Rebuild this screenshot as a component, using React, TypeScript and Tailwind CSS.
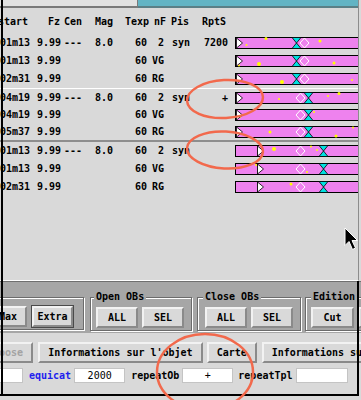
import React from "react";

type Row = { s: string; fz: string; cen?: string; mag?: string; t: string; nf: string; pis?: string; r?: string };
type Mark = { cut?: number; tri: number; dia: number; hour: number; dots: [number, number, number][] };

const rows: Row[] = [
  { s: "01m13", fz: "9.99", cen: "---", mag: "8.0", t: "60", nf: "2", pis: "syn", r: "7200" },
  { s: "01m13", fz: "9.99", t: "60", nf: "VG" },
  { s: "02m31", fz: "9.99", t: "60", nf: "RG" },
  { s: "04m19", fz: "9.99", cen: "---", mag: "8.0", t: "60", nf: "2", pis: "syn", r: "+" },
  { s: "04m19", fz: "9.99", t: "60", nf: "VG" },
  { s: "05m37", fz: "9.99", t: "60", nf: "RG" },
  { s: "01m13", fz: "9.99", cen: "---", mag: "8.0", t: "60", nf: "2", pis: "syn" },
  { s: "01m13", fz: "9.99", t: "60", nf: "VG" },
  { s: "02m31", fz: "9.99", t: "60", nf: "RG" },
];

const g1 = { tri: 1, hour: 57, dia: 65 };
const g2 = { tri: 1, dia: 61, hour: 69 };
const g3 = { cut: 22, tri: 22, dia: 61, hour: 84 };

const marks: Mark[] = [
  { ...g1, dots: [[31, 1.5, 1.5], [11.5, 8, 1], [85, 4, 1.5]] },
  { ...g1, dots: [[24, 9, 2], [4, 10.5, 1], [99, 8, 1.5]] },
  { ...g1, dots: [[47, 9, 2], [117, 7, 1]] },
  { ...g2, dots: [[44, 7, 1], [93, 4, 1], [104, 1.5, 1.5]] },
  { ...g2, dots: [[5, 8, 1], [79, 3, 1]] },
  { ...g2, dots: [[35, 6, 1.5], [101, 10, 1.5], [118, 1.5, 1]] },
  { ...g3, dots: [[39, 4, 2], [76, 1.5, 1], [82, 5, 1]] },
  { ...g3, dots: [[21, 2, 1], [72, 9, 1]] },
  { ...g3, dots: [[56, 3, 1.5]] },
];

function Bar({ m }: { m: Mark }) {
  const { tri, dia, hour, cut } = m;
  return (
    <svg width="124" height="12" className="block shrink-0">
      <rect x="0.5" y="0.5" width="160" height="11" fill="#ee82ee" stroke="#000" />
      {cut !== undefined && <line x1={cut + 0.5} y1="0.5" x2={cut + 0.5} y2="11.5" stroke="#000" />}
      {m.dots.map(([x, y, r], i) => (
        <circle key={i} cx={x} cy={y} r={r} fill="#ffff00" />
      ))}
      <polygon points={`${dia + 4.5},1 ${dia + 9},6 ${dia + 4.5},11 ${dia},6`} fill="none" stroke="#fff" strokeWidth="1" />
      <polygon
        points={`${hour},0.5 ${hour + 9},0.5 ${hour + 4.5},6 ${hour + 9},11.5 ${hour},11.5 ${hour + 4.5},6`}
        fill="#00e0e0"
        stroke="#000"
        strokeWidth="0.8"
      />
      <polygon points={`${tri + 0.5},1 ${tri + 6.5},6 ${tri + 0.5},11`} fill="#fff" stroke="#000" strokeWidth="0.8" />
    </svg>
  );
}

function DataRow({ r, m, h }: { r: Row; m: Mark; h: string }) {
  return (
    <div className={`flex items-center ${h}`}>
      <span className="w-[34px] shrink-0">{r.s}</span>
      <span className="w-[27px] shrink-0 text-right">{r.fz}</span>
      <span className="w-[34px] shrink-0 pl-[3px]">{r.cen}</span>
      <span className="w-[30px] shrink-0">{r.mag}</span>
      <span className="w-[22px] shrink-0 text-right">{r.t}</span>
      <span className="w-[17px] shrink-0 text-right">{r.nf}</span>
      <span className="w-[36px] shrink-0 pl-[8px]">{r.pis}</span>
      <span className="w-[28px] shrink-0 text-right">{r.r}</span>
      <span className="ml-[7px]">
        <Bar m={m} />
      </span>
    </div>
  );
}

function Btn({ children, cls = "" }: { children: React.ReactNode; cls?: string }) {
  return (
    <button
      className={`h-[21px] shrink-0 border-2 border-t-[#f2f2f2] border-l-[#f2f2f2] border-b-[#8a8a8a] border-r-[#8a8a8a] bg-[#d9d9d9] font-bold leading-none ${cls}`}
    >
      {children}
    </button>
  );
}

const frame = "shrink-0 border border-[#6b6b6b] shadow-[inset_1px_1px_0_#fff,1px_1px_0_#fff]";
const legend = "bg-[#a6a6a6] px-[2px] font-bold leading-[10px] text-black";

export default function App() {
  return (
    <div className="relative h-[400px] w-[361px] overflow-hidden bg-[#d9d9d9] font-['DejaVu_Sans_Mono',monospace] text-[10px] text-black">
      {/* list */}
      <div className="h-[281px] w-[359px] overflow-hidden border-b border-r border-b-white border-r-[#8c8c8c] font-bold leading-none">
        <div className="flex h-[8px]">
          <div className="w-[138px] border-r border-b-2 border-[#7a7a7a] bg-[#e2e2e2]" />
          <div className="flex-1 border-b-2 border-[#5a7f86] bg-[#62b4c4]" />
        </div>
        <div className="flex h-[26px] items-center pt-[2px]">
          <span className="ml-[-2px] w-[36px] shrink-0">start</span>
          <span className="w-[26px] shrink-0 text-right">Fz</span>
          <span className="w-[35px] shrink-0 pl-[4px]">Cen</span>
          <span className="w-[30px] shrink-0">Mag</span>
          <span className="w-[23px] shrink-0 text-right">Texp</span>
          <span className="w-[18px] shrink-0 text-right">nF</span>
          <span className="w-[33px] shrink-0 pl-[5px]">Pis</span>
          <span className="w-[27px] shrink-0 text-right">RptS</span>
        </div>
        <DataRow r={rows[0]} m={marks[0]} h="h-[18px]" />
        <DataRow r={rows[1]} m={marks[1]} h="h-[18px]" />
        <DataRow r={rows[2]} m={marks[2]} h="h-[18px]" />
        <div className="h-[1px] bg-white" />
        <DataRow r={rows[3]} m={marks[3]} h="h-[17px]" />
        <DataRow r={rows[4]} m={marks[4]} h="h-[18px]" />
        <DataRow r={rows[5]} m={marks[5]} h="h-[16px]" />
        <div className="h-[2px] bg-[#8e8e8e]" />
        <DataRow r={rows[6]} m={marks[6]} h="h-[18px]" />
        <DataRow r={rows[7]} m={marks[7]} h="h-[18px]" />
        <DataRow r={rows[8]} m={marks[8]} h="h-[18px]" />
      </div>

      {/* command panel */}
      <div className="flex h-[52px] items-start border-t border-[#6f6f6f] bg-[#a6a6a6] pt-[10px]">
        <fieldset className={`${frame} ml-[-19px] mt-[5px] flex w-[103px] gap-[5px] pb-[2px] pl-[7px] pt-[8px]`}>
          <Btn cls="w-[38px]">Max</Btn>
          <Btn cls="w-[41px] shadow-[0_0_0_1px_#4a4a4a]">Extra</Btn>
        </fieldset>
        <fieldset className={`${frame} ml-[6px] flex w-[102px] gap-[4px] pb-[2px] pl-[5px] pt-[5px]`}>
          <legend className={`${legend} ml-[-2px]`}>Open OBs</legend>
          <Btn cls="w-[42px]">ALL</Btn>
          <Btn cls="w-[42px]">SEL</Btn>
        </fieldset>
        <fieldset className={`${frame} ml-[5px] flex w-[104px] gap-[4px] pb-[2px] pl-[7px] pt-[5px]`}>
          <legend className={`${legend} ml-[-2px]`}>Close OBs</legend>
          <Btn cls="w-[42px]">ALL</Btn>
          <Btn cls="w-[42px]">SEL</Btn>
        </fieldset>
        <fieldset className={`${frame} ml-[4px] flex w-[104px] gap-[4px] pb-[2px] pl-[5px] pt-[5px]`}>
          <legend className={legend}>Edition</legend>
          <Btn cls="w-[43px]">Cut</Btn>
          <Btn cls="w-[43px]">Copy</Btn>
        </fieldset>
      </div>

      {/* bottom form */}
      <div className="h-[61px] pt-[9px]">
        <div className="flex whitespace-nowrap">
          <Btn cls="ml-[-23px] px-[8px] text-[#a3a3a3]">Choose</Btn>
          <Btn cls="ml-[5px] px-[8px]">Informations sur l'objet</Btn>
          <Btn cls="ml-[4px] px-[8px]">Carte</Btn>
          <Btn cls="ml-[5px] px-[8px]">Informations sur le template</Btn>
        </div>
        <div className="mt-[5px] flex h-[15px] items-center whitespace-nowrap">
          <div className="ml-[-29px] h-[15px] w-[52px] shrink-0 border border-[#c4c4c4] bg-white" />
          <span className="ml-[6px] font-bold text-[#1f1fee]">equicat</span>
          <div className="ml-[3px] flex h-[15px] w-[51px] shrink-0 items-center justify-center border border-[#c4c4c4] bg-white">2000</div>
          <span className="ml-[6px] font-bold">repeatOb</span>
          <div className="ml-[3px] flex h-[15px] w-[51px] shrink-0 items-center justify-center border border-[#c4c4c4] bg-white">+</div>
          <span className="ml-[5px] font-bold">repeatTpl</span>
          <div className="ml-[3px] h-[15px] w-[52px] shrink-0 border border-[#c4c4c4] bg-white" />
        </div>
      </div>
      <div className="h-[2px] w-[359px] bg-black" />

      {/* window frame lines over the content */}
      <div className="absolute left-[1px] top-0 h-[396px] w-[2px] bg-black" />
      <div className="absolute left-[357px] top-[281px] h-[115px] w-[2px] bg-black" />

      {/* mouse pointer */}
      <svg className="pointer-events-none absolute left-[344px] top-[227px]" width="16" height="25" viewBox="0 0 16 25">
        <path d="M1 1 L1 18.5 L5 14.5 L8.5 22.5 L11.5 21 L8 13.5 L13.5 13.5 Z" fill="#000" stroke="#fff" strokeWidth="1" strokeLinejoin="round" />
      </svg>

      {/* hand-drawn annotation marks */}
      <svg className="pointer-events-none absolute left-0 top-0" width="361" height="400">
        <g fill="none" stroke="#f2694c" strokeWidth="2.5" strokeLinecap="round">
          <ellipse cx="225" cy="99" rx="38" ry="19" transform="rotate(-3 225 99)" />
          <ellipse cx="225" cy="150" rx="38" ry="18.5" transform="rotate(3 225 150)" />
          <ellipse cx="205" cy="372" rx="48" ry="38" />
        </g>
      </svg>
    </div>
  );
}
